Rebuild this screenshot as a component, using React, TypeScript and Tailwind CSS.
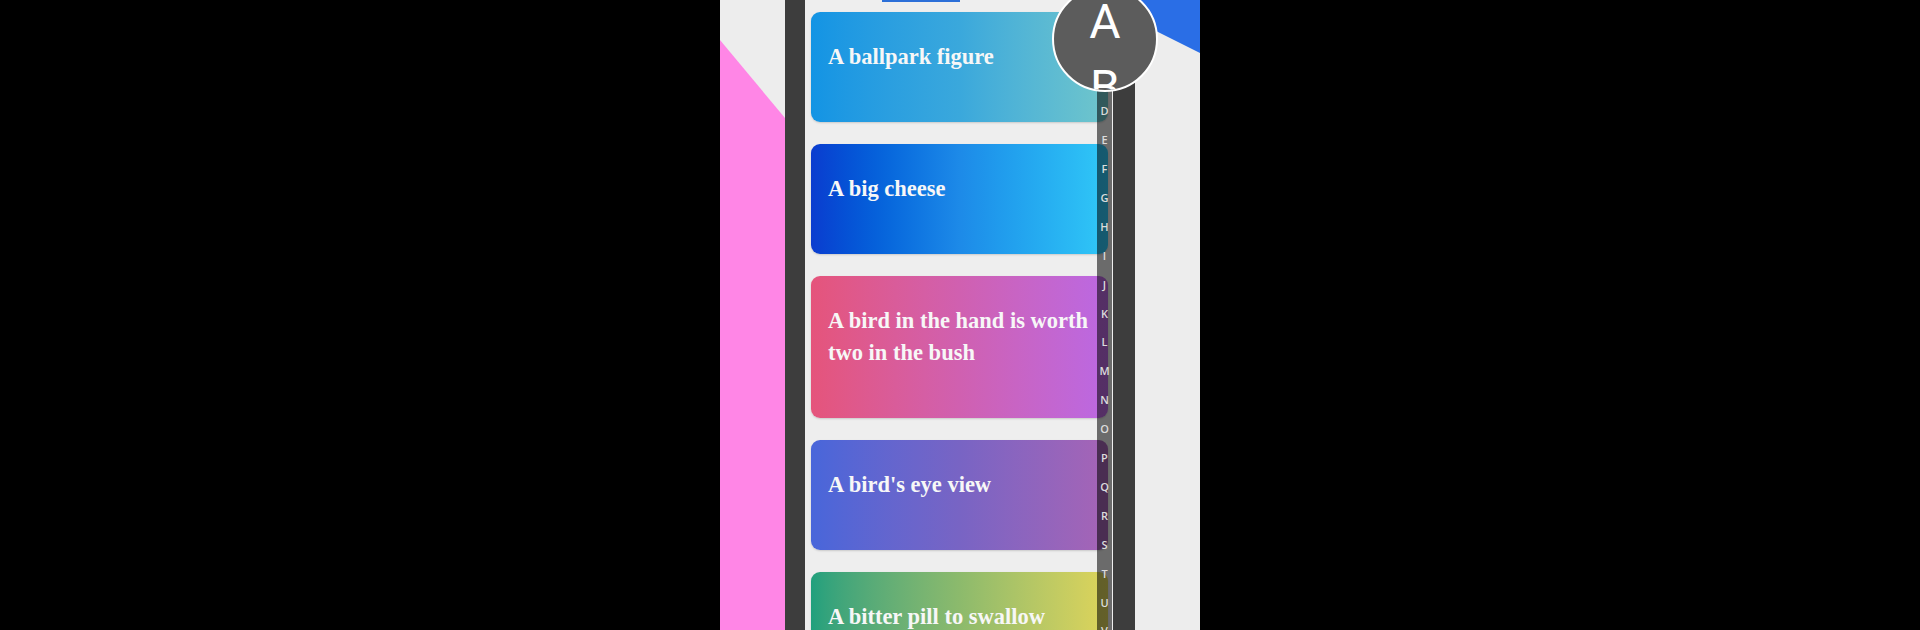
import React from "react";

const cards = [
  { text: "A ballpark figure", cls: "bg-linear-to-r from-[#1394e4] via-[#3aa8dc] to-[#70c6cb]" },
  { text: "A big cheese", cls: "bg-linear-to-r from-[#0b3ccf] via-[#1d8ae8] to-[#31c8f7]" },
  { text: "A bird in the hand is worth two in the bush", cls: "bg-linear-to-r from-[#e5547b] via-[#d060b0] to-[#bb68e3]" },
  { text: "A bird's eye view", cls: "bg-linear-to-r from-[#4866da] via-[#7864c4] to-[#a664b6]" },
  { text: "A bitter pill to swallow", cls: "bg-linear-to-r from-[#20a07d] via-[#8cba6c] to-[#ded45a]" },
];

const letters = "ABCDEFGHIJKLMNOPQRSTUVW".split("");

export default function App() {
  return (
    <div className="w-[1920px] h-[630px] bg-black flex justify-center overflow-hidden">
      <div className="relative w-[480px] h-[630px] bg-[#ededed] overflow-hidden">
        <svg className="absolute inset-0" width="480" height="630" viewBox="0 0 480 630">
          <polygon points="0,40 70,124 70,630 0,630" fill="#ff86e6" />
          <polygon points="410,0 480,0 480,53 410,18" fill="#2a6ee6" />
        </svg>

        <div className="relative ml-[65px] w-[350px] h-[630px] border-l-[20px] border-r-[22px] border-[#3d3d3d] bg-[#eeeeee]">
          <div className="relative h-full overflow-hidden">
            <div className="absolute top-0 left-[77px] w-[78px] h-[2px] bg-[#2b6fd8]" />
            <div className="flex flex-col gap-[22px] pt-[12px] pl-[6px]">
              {cards.map((c) => (
                <div
                  key={c.text}
                  className={`w-[297px] shrink-0 rounded-[9px] pl-[17px] pr-[14px] pt-[29px] pb-[49px] shadow-[0_1px_2px_rgba(0,0,0,0.15)] ${c.cls}`}
                >
                  <p className="text-[22.5px] leading-[32px] font-bold text-[#f7f7f7] font-['Liberation_Serif',serif]">
                    {c.text}
                  </p>
                </div>
              ))}
            </div>
            <div className="absolute top-0 bottom-0 right-[1px] w-[15px] bg-black/55 flex flex-col pt-[10.5px]">
              {letters.map((l) => (
                <div
                  key={l}
                  className="h-[28.9px] shrink-0 flex items-center justify-center text-[11px] font-semibold text-[#dcdcdc] font-['Open_Sans',sans-serif]"
                >
                  {l}
                </div>
              ))}
            </div>
          </div>
        </div>

        <div className="absolute left-[332px] top-[-14px] w-[106px] h-[106px] rounded-full border-2 border-white bg-[#5c5c5c] overflow-hidden">
          <div className="flex flex-col items-center pt-[1px] text-white font-['Roboto',sans-serif] font-normal text-[48px] leading-[66px]">
            <span>A</span>
            <span>B</span>
          </div>
        </div>
      </div>
    </div>
  );
}
